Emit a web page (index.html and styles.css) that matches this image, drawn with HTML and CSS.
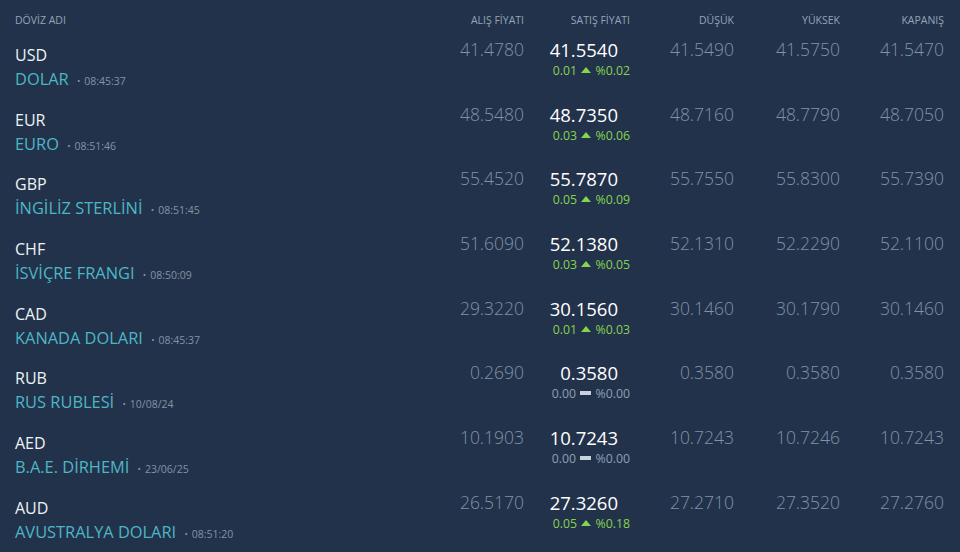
FILE: index.html
```html
<!DOCTYPE html>
<html lang="tr">
<head>
    <meta charset="UTF-8">
    <meta name="viewport" content="width=device-width, initial-scale=1.0">
    <title>Döviz Kurları</title>
    <link rel="stylesheet" href="styles.css">
</head>
<body>

    <div class="rates">
        <div class="row head">
            <div class="cell name-col">DÖVİZ ADI</div>
            <div class="cell">ALIŞ FİYATI</div>
            <div class="cell">SATIŞ FİYATI</div>
            <div class="cell">DÜŞÜK</div>
            <div class="cell">YÜKSEK</div>
            <div class="cell">KAPANIŞ</div>
        </div>

        <div class="row">
            <div class="cell name-col">
                <div class="code">USD</div>
                <div class="name">DOLAR <span class="time">08:45:37</span></div>
            </div>
            <div class="cell num">41.4780</div>
            <div class="cell sell">
                <div class="sell-val">41.5540</div>
                <div class="change up">0.01 <span class="arrow"></span> %0.02</div>
            </div>
            <div class="cell num">41.5490</div>
            <div class="cell num">41.5750</div>
            <div class="cell num">41.5470</div>
        </div>

        <div class="row">
            <div class="cell name-col">
                <div class="code">EUR</div>
                <div class="name">EURO <span class="time">08:51:46</span></div>
            </div>
            <div class="cell num">48.5480</div>
            <div class="cell sell">
                <div class="sell-val">48.7350</div>
                <div class="change up">0.03 <span class="arrow"></span> %0.06</div>
            </div>
            <div class="cell num">48.7160</div>
            <div class="cell num">48.7790</div>
            <div class="cell num">48.7050</div>
        </div>

        <div class="row">
            <div class="cell name-col">
                <div class="code">GBP</div>
                <div class="name">İNGİLİZ STERLİNİ <span class="time">08:51:45</span></div>
            </div>
            <div class="cell num">55.4520</div>
            <div class="cell sell">
                <div class="sell-val">55.7870</div>
                <div class="change up">0.05 <span class="arrow"></span> %0.09</div>
            </div>
            <div class="cell num">55.7550</div>
            <div class="cell num">55.8300</div>
            <div class="cell num">55.7390</div>
        </div>

        <div class="row">
            <div class="cell name-col">
                <div class="code">CHF</div>
                <div class="name">İSVİÇRE FRANGI <span class="time">08:50:09</span></div>
            </div>
            <div class="cell num">51.6090</div>
            <div class="cell sell">
                <div class="sell-val">52.1380</div>
                <div class="change up">0.03 <span class="arrow"></span> %0.05</div>
            </div>
            <div class="cell num">52.1310</div>
            <div class="cell num">52.2290</div>
            <div class="cell num">52.1100</div>
        </div>

        <div class="row">
            <div class="cell name-col">
                <div class="code">CAD</div>
                <div class="name">KANADA DOLARI <span class="time">08:45:37</span></div>
            </div>
            <div class="cell num">29.3220</div>
            <div class="cell sell">
                <div class="sell-val">30.1560</div>
                <div class="change up">0.01 <span class="arrow"></span> %0.03</div>
            </div>
            <div class="cell num">30.1460</div>
            <div class="cell num">30.1790</div>
            <div class="cell num">30.1460</div>
        </div>

        <div class="row">
            <div class="cell name-col">
                <div class="code">RUB</div>
                <div class="name">RUS RUBLESİ <span class="time">10/08/24</span></div>
            </div>
            <div class="cell num">0.2690</div>
            <div class="cell sell">
                <div class="sell-val">0.3580</div>
                <div class="change flat">0.00 <span class="bar"></span> %0.00</div>
            </div>
            <div class="cell num">0.3580</div>
            <div class="cell num">0.3580</div>
            <div class="cell num">0.3580</div>
        </div>

        <div class="row">
            <div class="cell name-col">
                <div class="code">AED</div>
                <div class="name">B.A.E. DİRHEMİ <span class="time">23/06/25</span></div>
            </div>
            <div class="cell num">10.1903</div>
            <div class="cell sell">
                <div class="sell-val">10.7243</div>
                <div class="change flat">0.00 <span class="bar"></span> %0.00</div>
            </div>
            <div class="cell num">10.7243</div>
            <div class="cell num">10.7246</div>
            <div class="cell num">10.7243</div>
        </div>

        <div class="row">
            <div class="cell name-col">
                <div class="code">AUD</div>
                <div class="name">AVUSTRALYA DOLARI <span class="time">08:51:20</span></div>
            </div>
            <div class="cell num">26.5170</div>
            <div class="cell sell">
                <div class="sell-val">27.3260</div>
                <div class="change up">0.05 <span class="arrow"></span> %0.18</div>
            </div>
            <div class="cell num">27.2710</div>
            <div class="cell num">27.3520</div>
            <div class="cell num">27.2760</div>
        </div>
    </div>

</body>
</html>
```

FILE: styles.css
```css
body {
    margin: 0;
    font-family: "Open Sans", "Noto Sans", sans-serif;
    background-color: #22324a;
    color: #7f93a8;
}
.rates {
    width: 960px;
}
.row {
    display: grid;
    grid-template-columns: 1fr 105px 106px 104px 106px 104px;
    padding: 0 16px 0 15px;
    height: 64.7px;
    box-sizing: border-box;
    border-bottom: 1px solid #203047;
}
.row:last-child {
    border-bottom: none;
}
.cell {
    text-align: right;
}
.name-col {
    text-align: left;
}
.head {
    height: 34px;
    border-bottom: none;
    align-items: center;
    font-size: 10.5px;
    color: #93a5b9;
    padding-top: 6px;
}
.code {
    font-size: 16px;
    color: #eef2f6;
    line-height: 22px;
    margin-top: 10px;
}
.name {
    font-size: 16.4px;
    color: #4db6c6;
    line-height: 22px;
    margin-top: 2px;
}
.time {
    font-size: 10.5px;
    color: #8293a6;
    margin-left: 4px;
}
.time::before {
    content: "•";
    font-size: 9px;
    margin-right: 4px;
    vertical-align: 1px;
}
.num {
    font-size: 17.5px;
    font-weight: 300;
    line-height: 24px;
    padding-top: 3px;
}
.sell-val {
    font-size: 18.5px;
    font-weight: 500;
    color: #ffffff;
    line-height: 26px;
    padding-top: 3px;
    padding-right: 12px;
}
.change {
    font-size: 12.3px;
    line-height: 15px;
}
.change.up {
    color: #86d34f;
}
.change.flat {
    color: #8aa0b6;
}
.arrow {
    display: inline-block;
    width: 0;
    height: 0;
    border-left: 5px solid transparent;
    border-right: 5px solid transparent;
    border-bottom: 6px solid #86d34f;
    margin: 0 1px 2px;
}
.bar {
    display: inline-block;
    width: 11px;
    height: 4px;
    background: #c8d2dc;
    margin: 0 1px 3px;
}
```
